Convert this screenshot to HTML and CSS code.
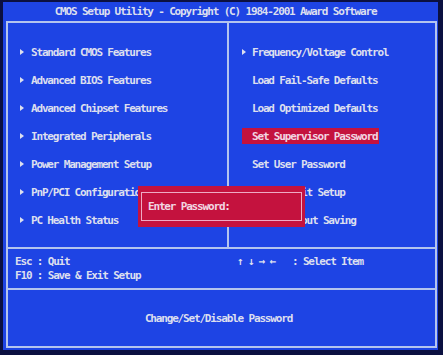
FILE: index.html
```html
<!DOCTYPE html>
<html lang="en">
<head>
    <meta charset="UTF-8">
    <meta name="viewport" content="width=device-width, initial-scale=1.0">
    <title>CMOS Setup Utility</title>
    <link rel="stylesheet" href="styles.css">
</head>
<body>
    <div class="screen">
        <div class="title">CMOS Setup Utility - Copyright (C) 1984-2001 Award Software</div>
        <div class="frame">
            <div class="menu">
                <ul class="col left">
                    <li class="item sub">Standard CMOS Features</li>
                    <li class="item sub">Advanced BIOS Features</li>
                    <li class="item sub">Advanced Chipset Features</li>
                    <li class="item sub">Integrated Peripherals</li>
                    <li class="item sub">Power Management Setup</li>
                    <li class="item sub">PnP/PCI Configurations</li>
                    <li class="item sub">PC Health Status</li>
                </ul>
                <ul class="col right">
                    <li class="item sub">Frequency/Voltage Control</li>
                    <li class="item">Load Fail-Safe Defaults</li>
                    <li class="item">Load Optimized Defaults</li>
                    <li class="item selected">Set Supervisor Password</li>
                    <li class="item">Set User Password</li>
                    <li class="item">Save &amp; Exit Setup</li>
                    <li class="item">Exit Without Saving</li>
                </ul>
            </div>
            <div class="keys">
                <div class="keys-left">
                    <div>Esc : Quit</div>
                    <div>F10 : Save &amp; Exit Setup</div>
                </div>
                <div class="keys-right">
                    <span class="arrows">&uarr; &darr; &rarr; &larr;</span>
                    <span>: Select Item</span>
                </div>
            </div>
            <div class="help">Change/Set/Disable Password</div>

            <!-- password prompt sits over the menu -->
            <div class="dialog">
                <div class="dialog-inner">Enter Password:</div>
            </div>
        </div>
    </div>
</body>
</html>
```

FILE: styles.css
```css
/* General Styles */
body {
    margin: 0;
    padding: 0;
    width: 443px;
    height: 355px;
    overflow: hidden;
    background-color: #0b1040;
    font-family: 'DejaVu Sans Mono', 'Liberation Mono', monospace;
    font-weight: bold;
    font-size: 11px;
    letter-spacing: -1.17px;
    color: #dcdfef;
}

.screen {
    margin: 2px 5px 0 3px;
    height: 348px;
    background-color: #1e44e4;
    padding: 0 1px 0 3px;
}

.title {
    height: 19px;
    line-height: 19px;
    text-align: center;
    padding-right: 12px;
    white-space: nowrap;
}

.frame {
    position: relative;
    height: 323px;
    border: 2px solid #b4c4ee;
    display: flex;
    flex-direction: column;
}

/* Menu */
.menu {
    height: 224px;
    display: flex;
    border-bottom: 2px solid #b4c4ee;
}

.col {
    list-style: none;
    margin: 0;
    padding: 15px 0 0 12px;
}

.col.left {
    width: 207px;
    border-right: 2px solid #b4c4ee;
}

.col.right {
    padding-left: 13px;
}

.item {
    height: 28px;
    display: flex;
    align-items: center;
    white-space: nowrap;
}

.item::before {
    content: "";
    width: 10px;
    flex: none;
}

.item.sub::before {
    width: 0;
    height: 0;
    margin-right: 6px;
    border-top: 3.5px solid transparent;
    border-bottom: 3.5px solid transparent;
    border-left: 4px solid #dcdfef;
}

.left .item.sub::before {
    margin-right: 7px;
}

.item.selected {
    width: fit-content;
    height: 16px;
    margin: 6px 0;
    padding-right: 2px;
    background-color: #c4123e;
    color: #f2d6e2;
}

/* Key help */
.keys {
    height: 41px;
    display: flex;
    border-bottom: 2px solid #b4c4ee;
    padding: 6px 0 0 7px;
    box-sizing: border-box;
    line-height: 14px;
}

.keys-left {
    width: 222px;
    flex: none;
}

.keys-right {
    display: flex;
    flex: none;
}

.arrows {
    flex: none;
    width: 55px;
    white-space: pre;
}

.help {
    flex: 1;
    display: flex;
    align-items: center;
    justify-content: center;
    padding-right: 6px;
}

/* Password dialog */
.dialog {
    position: absolute;
    left: 130px;
    top: 163px;
    width: 167px;
    height: 41px;
    padding: 6px 3px;
    box-sizing: border-box;
    background-color: #c4123e;
    color: #f2d6e2;
}

.dialog-inner {
    height: 100%;
    border: 1px solid #eeaac4;
    box-sizing: border-box;
    display: flex;
    align-items: center;
    padding-left: 6px;
}
```
